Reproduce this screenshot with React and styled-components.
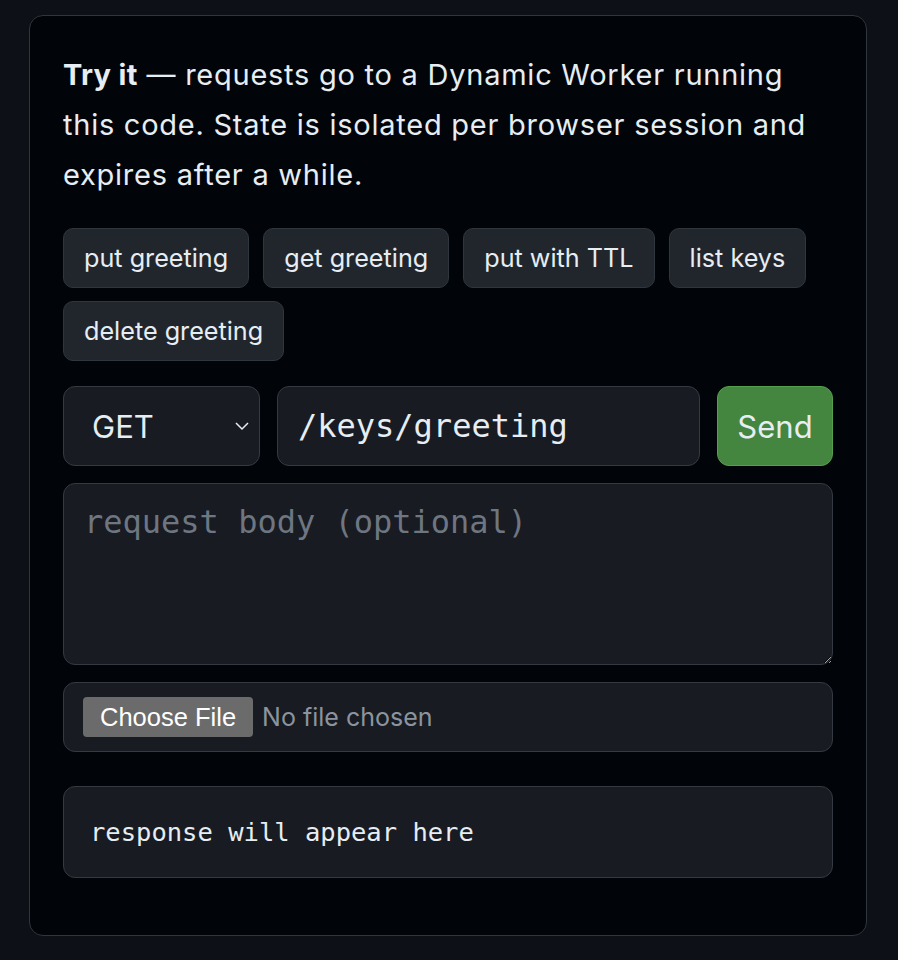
import styled, { createGlobalStyle } from "styled-components";

const Global = createGlobalStyle`
  html, body {
    margin: 0;
    background: #0d1117;
  }
  body {
    padding: 15px 31px 24px 29px;
    font-family: Inter, "Noto Sans", sans-serif;
    color: #e6edf3;
  }
`;

const Card = styled.section`
  border: 1px solid #30363d;
  border-radius: 14px;
  background: #010409;
  padding: 34px 33px 57px;
`;

const Intro = styled.p`
  margin: 0 0 28px;
  font-size: 29px;
  letter-spacing: 0.75px;
  line-height: 50px;
  color: #e6edf3;

  strong {
    font-weight: 700;
    letter-spacing: 0.3px;
  }
`;

const Presets = styled.div`
  display: flex;
  flex-wrap: wrap;
  gap: 13px 14px;
  margin-bottom: 25px;
`;

const Preset = styled.button`
  height: 60px;
  padding: 0 20px;
  border: 1px solid #30363d;
  border-radius: 10px;
  background: #21262d;
  color: #e6edf3;
  font-family: inherit;
  font-size: 25.2px;
  cursor: pointer;
`;

const RequestRow = styled.div`
  display: flex;
  gap: 17px;
  height: 80px;
  margin-bottom: 17px;
`;

const SelectWrap = styled.div`
  position: relative;
  width: 197px;
  flex: none;

  svg {
    position: absolute;
    right: 10px;
    top: 32px;
    pointer-events: none;
  }
`;

const Field = styled.div`
  border: 1px solid #353a42;
  border-radius: 12px;
  background: #181b22;
`;

const Select = styled(Field).attrs({ as: "select" })`
  appearance: none;
  width: 100%;
  height: 100%;
  padding: 0 0 0 28px;
  color: #e6edf3;
  font-family: inherit;
  font-size: 31px;
  outline: none;
`;

const PathInput = styled(Field).attrs({ as: "input" })`
  flex: 1;
  min-width: 0;
  padding: 0 20px;
  color: #e6edf3;
  font-family: "DejaVu Sans Mono", monospace;
  font-size: 32px;
  outline: none;
`;

const Send = styled.button`
  flex: none;
  width: 116px;
  border: 1px solid #55a04e;
  border-radius: 12px;
  background: #44863f;
  color: #e6edf3;
  font-family: inherit;
  font-size: 31px;
  cursor: pointer;
`;

const Body = styled(Field).attrs({ as: "textarea" })`
  display: block;
  box-sizing: border-box;
  width: 100%;
  height: 182px;
  margin-bottom: 17px;
  padding: 18px 20px;
  color: #e6edf3;
  font-family: "DejaVu Sans Mono", monospace;
  font-size: 32px;
  line-height: 1.3;
  outline: none;

  &::placeholder {
    color: #6e7681;
  }
`;

const FileRow = styled(Field)`
  display: flex;
  align-items: center;
  gap: 9px;
  height: 68px;
  padding: 0 19px;
`;

const ChooseButton = styled.label`
  display: flex;
  align-items: center;
  height: 40px;
  padding: 0 17px;
  border-radius: 4px;
  background: #6b6b6b;
  color: #ffffff;
  font-family: "Liberation Sans", Arial, sans-serif;
  font-size: 25.5px;
  cursor: pointer;
`;

const FileName = styled.span`
  color: #8b949e;
  font-family: Inter, sans-serif;
  font-size: 25px;
`;

const Response = styled(Field).attrs({ as: "pre" })`
  display: flex;
  align-items: center;
  height: 90px;
  margin: 34px 0 0;
  padding: 0 26px;
  color: #e6edf3;
  font-family: "DejaVu Sans Mono", monospace;
  font-size: 25.5px;
`;

const presets = ["put greeting", "get greeting", "put with TTL", "list keys", "delete greeting"];

export default function App() {
  return (
    <>
      <Global />
      <Card>
        <Intro>
          <strong>Try it</strong> — requests go to a Dynamic Worker running this code. State is
          isolated per browser session and expires after a while.
        </Intro>

        <Presets>
          {presets.map((p) => (
            <Preset key={p}>{p}</Preset>
          ))}
        </Presets>

        <RequestRow>
          <SelectWrap>
            <Select defaultValue="GET">
              <option>GET</option>
              <option>PUT</option>
              <option>DELETE</option>
            </Select>
            <svg width="16" height="16" viewBox="0 0 16 16">
              <path d="M2 5 8 11 14 5" fill="none" stroke="#e6edf3" strokeWidth="1.5" />
            </svg>
          </SelectWrap>
          <PathInput defaultValue="/keys/greeting" />
          <Send>Send</Send>
        </RequestRow>

        <Body placeholder="request body (optional)" />

        <FileRow>
          <ChooseButton>Choose File</ChooseButton>
          <FileName>No file chosen</FileName>
        </FileRow>

        <Response>response will appear here</Response>
      </Card>
    </>
  );
}
